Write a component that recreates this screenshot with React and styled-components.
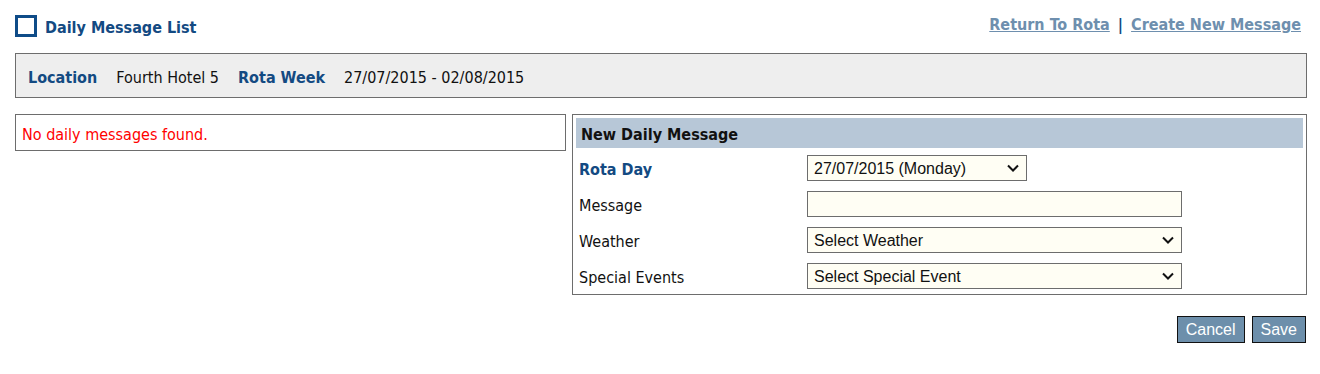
import React from 'react';
import styled, { createGlobalStyle } from 'styled-components';

const GlobalStyle = createGlobalStyle`
  body {
    margin: 0;
    background: #ffffff;
    font-family: 'DejaVu Sans Condensed', 'DejaVu Sans', sans-serif;
    font-size: 16px;
    color: #111111;
  }
`;

const Page = styled.div`
  padding: 15px 13px 0 15px;
`;

const Header = styled.div`
  display: flex;
  justify-content: space-between;
  align-items: flex-start;
  height: 38px;
`;

const TitleWrap = styled.div`
  display: flex;
  align-items: center;
  gap: 8px;
`;

const Square = styled.span`
  display: block;
  width: 16px;
  height: 16px;
  border: 3px solid #0f4c88;
`;

const Title = styled.h1`
  margin: 0;
  padding-top: 3px;
  font-size: 16px;
  font-weight: bold;
  color: #134a82;
`;

const Links = styled.div`
  display: flex;
  align-items: center;
  gap: 8px;
  margin-right: 6px;
  font-weight: bold;
  font-size: 16px;
`;

const NavLink = styled.a`
  color: #6e8fae;
  text-decoration: underline;
  cursor: pointer;
`;

const Sep = styled.span`
  color: #134a82;
`;

const InfoBar = styled.div`
  display: flex;
  align-items: center;
  gap: 19px;
  box-sizing: border-box;
  height: 45px;
  padding: 3px 12px 0;
  background: #eeeeee;
  border: 1px solid #6d6d6d;
`;

const Label = styled.span`
  font-weight: bold;
  color: #134a82;
`;

const Value = styled.span`
  color: #111111;
`;

const Content = styled.div`
  display: flex;
  align-items: flex-start;
  gap: 6px;
  margin-top: 16px;
`;

const EmptyBox = styled.div`
  display: flex;
  align-items: center;
  box-sizing: border-box;
  width: 551px;
  height: 37px;
  padding: 3px 0 0 6px;
  border: 1px solid #6d6d6d;
  color: #ff0000;
`;

const Side = styled.div`
  flex: 1;
`;

const Panel = styled.div`
  box-sizing: border-box;
  height: 181px;
  border: 1px solid #6d6d6d;
  padding: 3px;
`;

const PanelHeader = styled.div`
  height: 30px;
  display: flex;
  align-items: center;
  padding: 2px 0 0 5px;
  box-sizing: border-box;
  background: #b7c7d7;
  font-weight: bold;
  color: #111111;
`;

const Rows = styled.div`
  display: flex;
  flex-direction: column;
  gap: 10px;
  padding-top: 7px;
`;

const Row = styled.div`
  display: grid;
  grid-template-columns: 228px 1fr;
  align-items: center;
  height: 26px;
  padding-left: 3px;
`;

const RowLabel = styled.span`
  padding-top: 3px;
  color: ${(p) => (p.$strong ? '#134a82' : '#111111')};
  font-weight: ${(p) => (p.$strong ? 'bold' : 'normal')};
`;

const fieldCss = `
  box-sizing: border-box;
  height: 26px;
  border: 1px solid #6d6d6d;
  background: #fffef4;
  font-family: 'Liberation Sans', Arial, sans-serif;
  font-size: 16px;
  color: #111111;
  border-radius: 0;
  padding: 0 6px;
  margin: 0;
  outline: none;
`;

const SelectWrap = styled.div`
  position: relative;
  width: ${(p) => p.$w}px;
  height: 26px;
`;

const Select = styled.select`
  ${fieldCss}
  width: 100%;
  appearance: none;
  -webkit-appearance: none;
`;

const Chevron = styled.svg`
  position: absolute;
  right: 8px;
  top: 9px;
  width: 12px;
  height: 8px;
  pointer-events: none;
`;

const TextInput = styled.input`
  ${fieldCss}
  width: 375px;
`;

const Actions = styled.div`
  display: flex;
  justify-content: flex-end;
  gap: 7px;
  margin-top: 21px;
  margin-right: 1px;
`;

const Button = styled.button`
  box-sizing: border-box;
  height: 27px;
  padding: 0 8px;
  background: #6d8fab;
  border: 1px solid #111111;
  color: #ffffff;
  font-family: 'Liberation Sans', Arial, sans-serif;
  font-size: 16px;
  border-radius: 0;
  cursor: pointer;
`;

const Dropdown = ({ w, children, defaultValue }) => (
  <SelectWrap $w={w}>
    <Select defaultValue={defaultValue}>{children}</Select>
    <Chevron viewBox="0 0 12 8">
      <path d="M1 1.5 L6 6.5 L11 1.5" fill="none" stroke="#111" strokeWidth="2" />
    </Chevron>
  </SelectWrap>
);

export default function App() {
  return (
    <>
      <GlobalStyle />
      <Page>
        <Header>
          <TitleWrap>
            <Square />
            <Title>Daily Message List</Title>
          </TitleWrap>
          <Links>
            <NavLink>Return To Rota</NavLink>
            <Sep>|</Sep>
            <NavLink>Create New Message</NavLink>
          </Links>
        </Header>
        <InfoBar>
          <Label>Location</Label>
          <Value>Fourth Hotel 5</Value>
          <Label>Rota Week</Label>
          <Value>27/07/2015 - 02/08/2015</Value>
        </InfoBar>
        <Content>
          <EmptyBox>No daily messages found.</EmptyBox>
          <Side>
            <Panel>
              <PanelHeader>New Daily Message</PanelHeader>
              <Rows>
                <Row>
                  <RowLabel $strong>Rota Day</RowLabel>
                  <Dropdown w={220} defaultValue="mon">
                    <option value="mon">27/07/2015 (Monday)</option>
                  </Dropdown>
                </Row>
                <Row>
                  <RowLabel>Message</RowLabel>
                  <TextInput type="text" />
                </Row>
                <Row>
                  <RowLabel>Weather</RowLabel>
                  <Dropdown w={375}>
                    <option>Select Weather</option>
                  </Dropdown>
                </Row>
                <Row>
                  <RowLabel>Special Events</RowLabel>
                  <Dropdown w={375}>
                    <option>Select Special Event</option>
                  </Dropdown>
                </Row>
              </Rows>
            </Panel>
            <Actions>
              <Button>Cancel</Button>
              <Button>Save</Button>
            </Actions>
          </Side>
        </Content>
      </Page>
    </>
  );
}
